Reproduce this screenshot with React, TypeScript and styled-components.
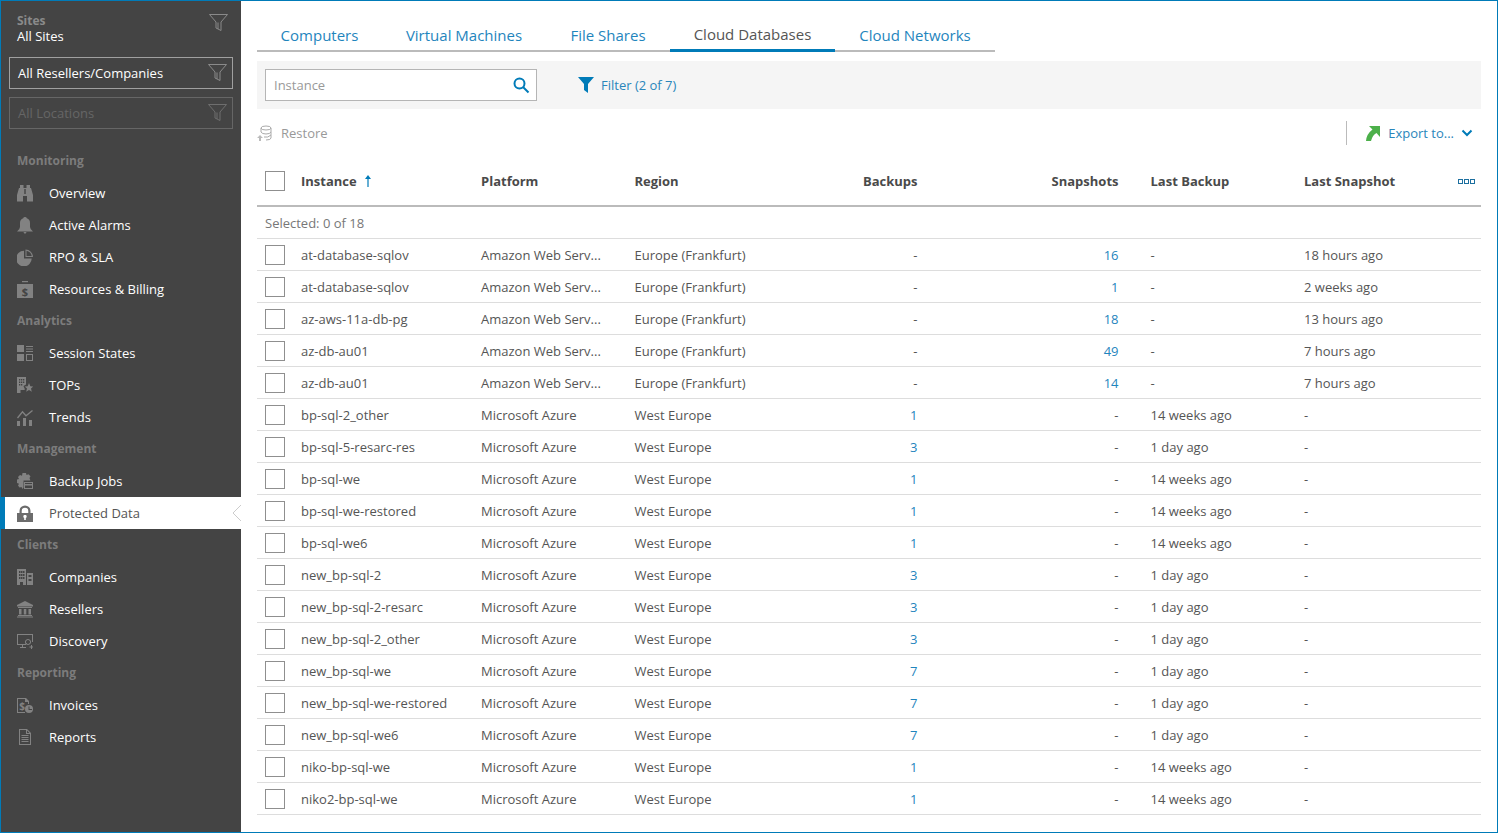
import React from "react";
import styled, { createGlobalStyle } from "styled-components";

const Global = createGlobalStyle`
  html, body { margin: 0; padding: 0; background: #fff; }
  body { font-family: "Open Sans", "Liberation Sans", sans-serif; font-size: 13px; color: #555; }
  * { box-sizing: border-box; }
`;

const Frame = styled.div`
  width: 1498px; height: 833px; border: 1px solid #007bb8; display: flex; overflow: hidden; background: #fff;
`;
const Sidebar = styled.aside`
  width: 240px; flex: none; background: #444; color: #fff; display: flex; flex-direction: column;
`;
const SiteBlock = styled.div`
  height: 56px; padding: 12px 12px 0 16px; display: flex; justify-content: space-between; align-items: flex-start;
  position: relative;
`;
const SiteText = styled.div`
  display: flex; flex-direction: column; line-height: 16px;
`;
const SiteLabel = styled.span`
  color: #8a8a8a; font-weight: 700; font-size: 12px; height: 15px;
`;
const SiteValue = styled.span`
  color: #fff; font-size: 13px;
`;
const FilterBox = styled.div<{ $disabled?: boolean }>`
  margin: 0 8px 8px; height: 32px; border: 1px solid ${p => (p.$disabled ? "#666" : "#a0a0a0")};
  display: flex; align-items: center; justify-content: space-between; padding: 0 4px 0 8px;
  color: ${p => (p.$disabled ? "#666" : "#fff")}; font-size: 13px;
`;
const Nav = styled.nav`
  margin-top: 8px; display: flex; flex-direction: column;
`;
const Section = styled.div`
  height: 32px; line-height: 32px; padding-left: 16px; font-size: 12px; font-weight: 700; color: #7c7c7c;
`;
const NavItem = styled.div<{ $active?: boolean }>`
  position: relative; height: 32px; display: flex; align-items: center; gap: 16px; padding-left: ${p => (p.$active ? "12px" : "16px")};
  font-size: 13px; color: ${p => (p.$active ? "#555" : "#fff")}; background: ${p => (p.$active ? "#fff" : "transparent")};
  border-left: ${p => (p.$active ? "4px solid #007bb8" : "0")};
`;
const Notch = styled.svg`
  position: absolute; right: 0; top: 8px;
`;
const Main = styled.main`
  flex: 1; min-width: 0; padding: 0 16px; display: flex; flex-direction: column;
`;
const Tabs = styled.div`
  margin-top: 18px; height: 33px; width: 738px; border-bottom: 2px solid #bbb; display: flex;
`;
const Tab = styled.div<{ $active?: boolean; $w: number }>`
  width: ${p => p.$w}px; height: ${p => (p.$active ? "33px" : "31px")}; text-align: center; font-size: 15px;
  line-height: ${p => (p.$active ? "31px" : "33px")}; color: ${p => (p.$active ? "#555" : "#1f85bd")};
  border-bottom: ${p => (p.$active ? "3px solid #007bb8" : "0")}; white-space: nowrap;
`;
const FilterBar = styled.div`
  margin-top: 9px; height: 48px; background: #f5f5f5; display: flex; align-items: center; padding-left: 8px;
`;
const Search = styled.div`
  width: 272px; height: 32px; background: #fff; border: 1px solid #b5b5b5; display: flex; align-items: center;
  justify-content: space-between; padding: 0 6px 0 8px; color: #999;
`;
const FilterLink = styled.div`
  margin-left: 41px; display: flex; align-items: center; gap: 7px; color: #2a86bb;
`;
const Actions = styled.div`
  height: 48px; display: flex; align-items: center; justify-content: space-between; padding-right: 8px;
`;
const Restore = styled.div`
  display: flex; align-items: center; gap: 8px; color: #999;
`;
const Export = styled.div`
  height: 24px; border-left: 1px solid #bbb; padding-left: 18px; display: flex; align-items: center; gap: 7px; color: #2a86bb;
`;
const Row = styled.div<{ $head?: boolean }>`
  display: grid; grid-template-columns: 36px 180px 153.5px 200px 83px 201px 185.5px 153.5px 1fr;
  height: ${p => (p.$head ? "50px" : "32px")}; padding-left: 8px; align-items: center;
  border-bottom: ${p => (p.$head ? "2px solid #bbb" : "1px solid #ddd")};
  font-weight: ${p => (p.$head ? 700 : 400)}; color: ${p => (p.$head ? "#4a4a4a" : "#555")};
`;
const Cell = styled.div<{ $right?: boolean; $pad?: boolean; $link?: boolean }>`
  text-align: ${p => (p.$right ? "right" : "left")}; padding-left: ${p => (p.$pad ? "32px" : "0")};
  color: ${p => (p.$link ? "#1f85bd" : "inherit")}; white-space: nowrap;
`;
const HeadInner = styled.div`
  display: flex; align-items: center; gap: 7px;
`;
const Box = styled.div`
  width: 20px; height: 20px; border: 1px solid #8f8f8f; background: #fff;
`;
const Selected = styled.div`
  height: 32px; line-height: 33px; padding-left: 8px; color: #777; border-bottom: 1px solid #ddd;
`;
const More = styled.div`
  display: flex; justify-content: flex-end; gap: 1px; padding-right: 8px;
`;
const Dot = styled.span`
  width: 5px; height: 5px; border: 1px solid #1c6f9f;
`;

const ICON = "#828282";
const Svg: React.FC<{ children: React.ReactNode; c?: string }> = ({ children, c = ICON }) => (
  <svg width="16" height="17" viewBox="0 0 16 17" fill={c} stroke="none" style={{ flex: "none" }}>{children}</svg>
);
const Funnel: React.FC<{ c: string }> = ({ c }) => (
  <svg width="20" height="20" viewBox="0 0 20 20" fill="none" stroke={c} strokeWidth="1"><path d="M.5 1.500h18l-6.500 7.500v8.500l-5-2.500V9z" /><path d="M9 9.500v6.500" /></svg>
);
const icons: Record<string, React.ReactNode> = {
  overview: <Svg><path d="M3 0h3.500v3h3V0H13v3h1l2 7v6.500h-6V11H6v5.500H0V10l2-7h1z" /><path d="M7.300 4h1.400v5H7.300z" fill="#444" /></Svg>,
  alarms: <Svg><path d="M8 0q1.500 0 1.800 1.300Q13 2.500 13 6v4q0 2 3 4.500H0Q3 12 3 10V6q0-3.500 3.200-4.700Q6.500 0 8 0z" /><path d="M6.300 15h3.400L8 17z" /></Svg>,
  rpo: <Svg><path d="M7 1.800V9.500h7.700A7.800 7.800 0 1 1 7 1.800z" /><path d="M8.500.5A7.500 7.500 0 0 1 16 8H8.500zM9.500 1.700V7h5.200A6.500 6.500 0 0 0 9.500 1.700z" fillRule="evenodd" /></Svg>,
  billing: <Svg><path d="M5 0h6v1.200H5z" /><path d="M0 3h16v14H0z" /><text x="8" y="14.500" fontSize="11" fontWeight="700" fill="#444" textAnchor="middle" fontFamily="Open Sans">$</text></Svg>,
  session: <Svg><path d="M0 0h7v7H0zM0 9h7v7H0z" /><path d="M9 1h7v1H9zM9 3.500h7v1H9zM9 6h7v1H9zM9 9h7v7H9zM10 10v5h5v-5z" fillRule="evenodd" /></Svg>,
  tops: <Svg><path d="M0 0h9v7.500L6.500 9l1.500 3.500-1 .5H3.500v3H0zM2 2v1.500h1.300V2zM4 2v1.500h1.300V2zM6 2v1.500h1.300V2zM2 4.500V6h1.300V4.500zM4 4.500V6h1.300V4.500zM6 4.500V6h1.300V4.500zM2 7v1.500h1.300V7zM4 7v1.500h1.300V7z" fillRule="evenodd" /><path d="M12 6l1.300 3.300 3 .2-2.300 2 .8 3.300-2.800-1.700-2.800 1.700.8-3.300-2.300-2 3-.2z" /></Svg>,
  trends: <Svg><path d="M0 12h3v5H0zM6 9h3v8H6zM12 11h3v6h-3z" /><path d="M.5 9L5.500 2.800l3.500 4L15.500 1.500" fill="none" stroke={ICON} strokeWidth="1.300" /></Svg>,
  jobs: <Svg><path d="M5.500 0h3.500l.5 2 2-.8 2 2-1 1.800.9 2.500H6.500V14.500L5.500 16 4.500 14l-2 .5L1 12.500l1-1.800L0 10V6.500l2-.5-1-2L3 2l2 .8z" /><path d="M7 9h9v7H7zM8 10v1h7v-1zM8 12.500V15h7v-2.500z" fillRule="evenodd" /></Svg>,
  lock: <Svg c="#6c6c6c"><path d="M2.500 8V6a5.500 5.500 0 0 1 11 0v2h-2.200V6a3.300 3.300 0 0 0-6.600 0v2z" /><path d="M0 8h16v9H0zM7.200 10a1.700 1.700 0 0 0 0 3v2h1.600v-2a1.700 1.700 0 0 0 0-3z" fillRule="evenodd" /></Svg>,
  companies: <Svg><path d="M0 0h9v16H6v-3H3v3H0zM2 2v2h1.500V2zM4 2v2h1.500V2zM6 2v2h1.500V2zM2 5v2h1.500V5zM4 5v2h1.500V5zM6 5v2h1.500V5zM2 8v2h1.500V8zM4 8v2h1.500V8zM6 8v2h1.500V8z" fillRule="evenodd" /><path d="M10 4h6v12h-6zM11.500 6v2h3V6zM11.500 10v2h3v-2z" fillRule="evenodd" /></Svg>,
  resellers: <Svg><path d="M8 0l8 4v1.500H0V4zM1 6h14v1H1zM2 8h2.500v5.500H2zM6.800 8h2.500v5.500H6.800zM11.500 8H14v5.500h-2.500zM1 14h14v1H1zM0 15.500h16v1H0z" /></Svg>,
  discovery: <Svg><path d="M0 1h16v8h-1V2H1v9h8v1H6v2h3v1H3v-1h2v-2H0z" /><path d="M11 6a3 3 0 1 0 .01 0zM11 7a2 2 0 1 1-.01 0z" fillRule="evenodd" /><path d="M14 12h1v1.500h1.500v1H15V16h-1v-1.500h-1.500v-1H14z" /><path d="M8 11l1.500-1 .5.700-1.500 1z" /></Svg>,
  invoices: <Svg><path d="M0 1h9l3 3v3h-1V5H8V2H1v13h7v1H0z" /><text x="5" y="12.500" fontSize="10" fontWeight="700" fill={ICON} textAnchor="middle" fontFamily="Open Sans">$</text><circle cx="12" cy="12" r="4" /><path d="M11.500 9.500h1v2.500H15v1h-3.500z" fill="#444" /></Svg>,
  reports: <Svg><path d="M2 0h8l4 4v12H2zM3 1v14h10V5H9V1zM10 1.500V4h2.500z" fillRule="evenodd" /><path d="M4.500 6h7v1h-7zM4.500 8h7v1h-7zM4.500 10h7v1h-7zM4.500 12h7v1h-7z" /></Svg>,
};

const nav: [string, string | null, boolean?][] = [
  ["Monitoring", null], ["Overview", "overview"], ["Active Alarms", "alarms"], ["RPO & SLA", "rpo"], ["Resources & Billing", "billing"],
  ["Analytics", null], ["Session States", "session"], ["TOPs", "tops"], ["Trends", "trends"],
  ["Management", null], ["Backup Jobs", "jobs"], ["Protected Data", "lock", true],
  ["Clients", null], ["Companies", "companies"], ["Resellers", "resellers"], ["Discovery", "discovery"],
  ["Reporting", null], ["Invoices", "invoices"], ["Reports", "reports"],
];

const aws = "Amazon Web Serv...";
const az = "Microsoft Azure";
const fr = "Europe (Frankfurt)";
const we = "West Europe";
type R = [string, string, string, string, string, string, string];
const rows: R[] = [
  ["at-database-sqlov", aws, fr, "-", "16", "-", "18 hours ago"],
  ["at-database-sqlov", aws, fr, "-", "1", "-", "2 weeks ago"],
  ["az-aws-11a-db-pg", aws, fr, "-", "18", "-", "13 hours ago"],
  ["az-db-au01", aws, fr, "-", "49", "-", "7 hours ago"],
  ["az-db-au01", aws, fr, "-", "14", "-", "7 hours ago"],
  ["bp-sql-2_other", az, we, "1", "-", "14 weeks ago", "-"],
  ["bp-sql-5-resarc-res", az, we, "3", "-", "1 day ago", "-"],
  ["bp-sql-we", az, we, "1", "-", "14 weeks ago", "-"],
  ["bp-sql-we-restored", az, we, "1", "-", "14 weeks ago", "-"],
  ["bp-sql-we6", az, we, "1", "-", "14 weeks ago", "-"],
  ["new_bp-sql-2", az, we, "3", "-", "1 day ago", "-"],
  ["new_bp-sql-2-resarc", az, we, "3", "-", "1 day ago", "-"],
  ["new_bp-sql-2_other", az, we, "3", "-", "1 day ago", "-"],
  ["new_bp-sql-we", az, we, "7", "-", "1 day ago", "-"],
  ["new_bp-sql-we-restored", az, we, "7", "-", "1 day ago", "-"],
  ["new_bp-sql-we6", az, we, "7", "-", "1 day ago", "-"],
  ["niko-bp-sql-we", az, we, "1", "-", "14 weeks ago", "-"],
  ["niko2-bp-sql-we", az, we, "1", "-", "14 weeks ago", "-"],
];

const tabs: [string, number][] = [["Computers", 125], ["Virtual Machines", 164], ["File Shares", 124], ["Cloud Databases", 165], ["Cloud Networks", 160]];

export default function App() {
  return (
    <Frame>
      <Global />
      <Sidebar>
        <SiteBlock>
          <SiteText><SiteLabel>Sites</SiteLabel><SiteValue>All Sites</SiteValue></SiteText>
          <Funnel c="#8a8a8a" />
        </SiteBlock>
        <FilterBox>All Resellers/Companies<Funnel c="#8a8a8a" /></FilterBox>
        <FilterBox $disabled>All Locations<Funnel c="#6e6e6e" /></FilterBox>
        <Nav>
          {nav.map(([label, icon, active]) =>
            icon ? (
              <NavItem key={label} $active={active}>
                {icons[icon]}{label}
                {active && (
                  <Notch width="9" height="16" viewBox="0 0 9 16"><path d="M9 0L1 8l8 8" fill="#fff" stroke="#ccc" strokeWidth="1" /></Notch>
                )}
              </NavItem>
            ) : (
              <Section key={label}>{label}</Section>
            )
          )}
        </Nav>
      </Sidebar>
      <Main>
        <Tabs>
          {tabs.map(([t, w]) => <Tab key={t} $w={w} $active={t === "Cloud Databases"}>{t}</Tab>)}
        </Tabs>
        <FilterBar>
          <Search>
            Instance
            <svg width="18" height="18" viewBox="0 0 18 18" fill="none" stroke="#007bb8" strokeWidth="2"><circle cx="7.500" cy="7.500" r="5" /><path d="M11 11l5.500 5.500" /></svg>
          </Search>
          <FilterLink>
            <svg width="16" height="16" viewBox="0 0 16 16" fill="#007bb8"><path d="M0 0h16L10 7v9L6 13V7z" /></svg>
            Filter (2 of 7)
          </FilterLink>
        </FilterBar>
        <Actions>
          <Restore>
            <svg width="16" height="16" viewBox="0 0 16 16" fill="none" stroke="#aaa" strokeWidth="1"><ellipse cx="9" cy="3" rx="5" ry="2" /><path d="M4 3v4M14 3v10q0 2-5 2M4 7q1 2 5 2t5-2M7 12q4 1 7-2" /><path d="M0 13l3-3 3 3H4v3H2v-3z" fill="#bbb" stroke="none" /></svg>
            Restore
          </Restore>
          <Export>
            <svg width="16" height="16" viewBox="0 0 16 16" fill="#4cb04a"><path d="M4 1h11v11l-3.500-4Q7.500 10 6 16H1Q1.500 9 7.500 4.500z" /></svg>
            Export to...
            <svg width="12" height="12" viewBox="0 0 12 12" fill="none" stroke="#007bb8" strokeWidth="2"><path d="M1.500 3.500L6 8l4.500-4.500" /></svg>
          </Export>
        </Actions>
        <Row $head>
          <Box />
          <HeadInner>Instance
            <svg width="8" height="14" viewBox="0 0 8 14" fill="#007bb8"><path d="M4 1l3 4H4.600v8H3.400V5H1z" /></svg>
          </HeadInner>
          <Cell>Platform</Cell>
          <Cell>Region</Cell>
          <Cell $right>Backups</Cell>
          <Cell $right>Snapshots</Cell>
          <Cell $pad>Last Backup</Cell>
          <Cell>Last Snapshot</Cell>
          <More><Dot /><Dot /><Dot /></More>
        </Row>
        <Selected>Selected: 0 of 18</Selected>
        {rows.map((r, i) => (
          <Row key={i}>
            <Box />
            <Cell>{r[0]}</Cell>
            <Cell>{r[1]}</Cell>
            <Cell>{r[2]}</Cell>
            <Cell $right $link={r[3] !== "-"}>{r[3]}</Cell>
            <Cell $right $link={r[4] !== "-"}>{r[4]}</Cell>
            <Cell $pad>{r[5]}</Cell>
            <Cell>{r[6]}</Cell>
          </Row>
        ))}
      </Main>
    </Frame>
  );
}
